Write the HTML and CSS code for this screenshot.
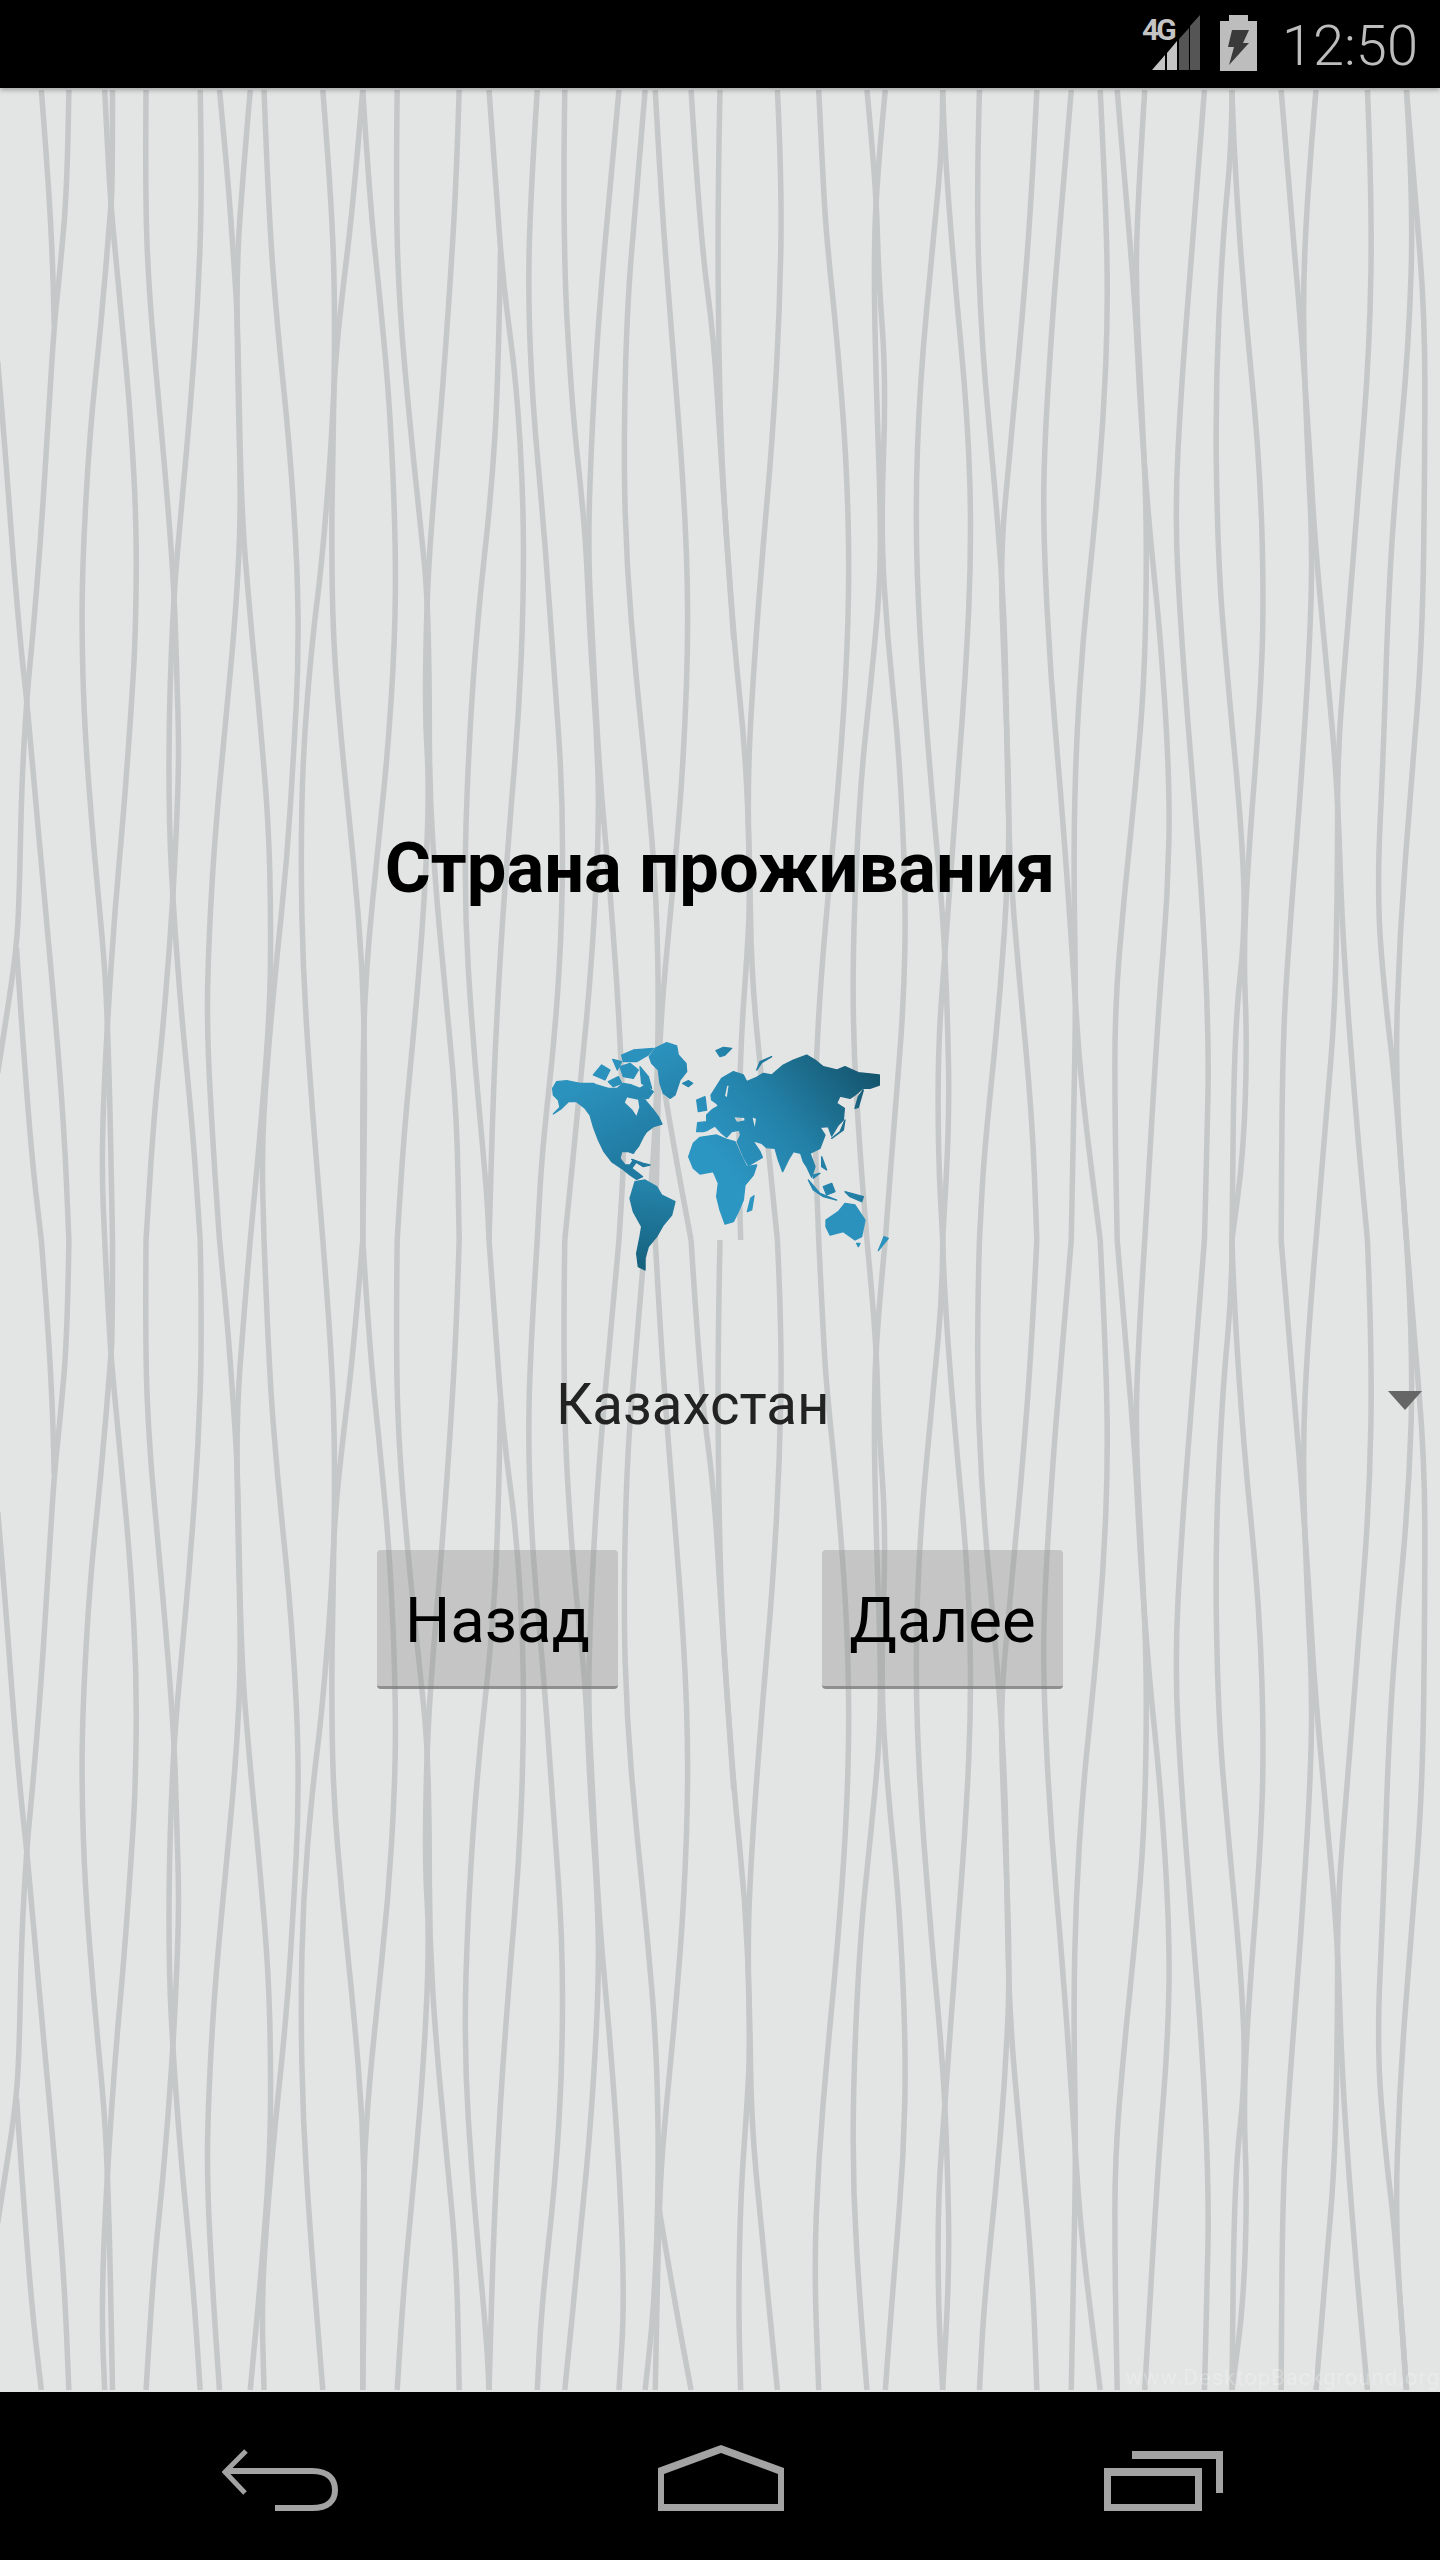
FILE: index.html
```html
<!DOCTYPE html>
<html lang="ru">

<head>
    <meta charset="UTF-8">
    <meta name="viewport" content="width=device-width, initial-scale=1.0">
    <title>Страна проживания</title>
    <link rel="stylesheet" href="styles.css">
</head>

<body>
    <div class="phone">
        <!-- status bar -->
        <div class="status-bar">
            <div class="signal">
                <span class="signal-label">4G</span>
                <svg class="signal-bars" width="48" height="55" viewBox="0 0 48 55">
                    <polygon fill="#c4c4c4" points="0,55 13,40 13,55" />
                    <polygon fill="#c4c4c4" points="15,38 25,26 25,55 15,55" />
                    <polygon fill="#555" points="27,24 37,13 37,55 27,55" />
                    <polygon fill="#555" points="38,11 48,0 48,55 38,55" />
                </svg>
            </div>
            <svg class="battery" width="37" height="56" viewBox="0 0 37 56">
                <path fill="#bdbdbd" d="M9 0H28V6H37V56H0V6H9Z" />
                <polygon fill="#3a3a3a" points="12,15 29,15 23,28 29,28 9,50 14,32 8,32" />
            </svg>
            <span class="clock">12:50</span>
        </div>

        <div class="screen">
            <!-- wallpaper, one tile drawn twice. paths come from waves.js -->
            <svg class="wallpaper" viewBox="0 0 3136 3136" preserveAspectRatio="none">
                <defs>
                    <g id="waves"></g>
                </defs>
                <use href="#waves" />
                <use href="#waves" y="1568" />
            </svg>

            <div class="content">
                <h1 class="title">Страна проживания</h1>

                <svg class="world-map" width="380" height="280" viewBox="0 0 1140 840">
                    <defs>
                        <linearGradient id="landEast" gradientUnits="userSpaceOnUse" x1="620" y1="500" x2="1030" y2="170">
                            <stop offset="0" stop-color="#2c96c3" />
                            <stop offset="0.45" stop-color="#2381a8" />
                            <stop offset="1" stop-color="#15566f" />
                        </linearGradient>
                        <linearGradient id="landNorth" gradientUnits="userSpaceOnUse" x1="180" y1="190" x2="300" y2="430">
                            <stop offset="0" stop-color="#2b92bd" />
                            <stop offset="1" stop-color="#2079a0" />
                        </linearGradient>
                        <linearGradient id="landSouth" gradientUnits="userSpaceOnUse" x1="370" y1="490" x2="340" y2="750">
                            <stop offset="0" stop-color="#2584ab" />
                            <stop offset="1" stop-color="#14607c" />
                        </linearGradient>
                    </defs>
                    <g fill="url(#landNorth)" stroke="url(#landNorth)" stroke-width="4" stroke-linejoin="round">
                        <!-- north america -->
                        <path d="M68,205 L80,185 L110,182 L150,190 L190,190 L200,195 L235,205 L262,205 L280,190 L305,195 L330,205 L345,195 L370,215 L355,235 L328,238 L290,230 L282,248 L305,270 L320,292 L330,262 L326,238 L345,240 L370,270 L385,290 L396,312 L370,320 L350,335 L340,350 L325,380 L315,392 L310,400 L295,395 L275,395 L270,415 L285,435 L300,435 L310,420 L320,425 L305,445 L325,460 L338,470 L320,478 L300,465 L275,445 L245,425 L222,395 L205,360 L190,320 L180,285 L165,265 L140,245 L115,245 L95,265 L70,282 L90,262 L85,240 L70,225 Z" />
                        <!-- arctic islands -->
                        <path d="M190,165 L215,135 L240,150 L225,180 Z" />
                        <path d="M248,118 L275,125 L262,150 Z" />
                        <path d="M275,105 L310,90 L370,85 L355,105 L320,125 L280,125 Z" />
                        <path d="M270,140 L300,130 L325,150 L310,175 L280,170 Z" />
                        <path d="M330,140 L355,170 L365,205 L335,190 Z" />
                        <path d="M235,185 L265,170 L275,190 L250,200 Z" />
                        <!-- greenland, iceland, caribbean -->
                        <path d="M358,110 L375,85 L410,68 L440,78 L445,105 L468,130 L470,155 L450,180 L435,225 L420,235 L400,220 L390,190 L385,150 L365,130 Z" />
                        <path d="M458,190 L475,182 L488,190 L475,200 Z" />
                        <path d="M305,418 L340,430 L360,435 L340,440 Z" />
                    </g>
                    <path fill="url(#landSouth)" stroke="url(#landSouth)" stroke-width="4" stroke-linejoin="round" d="M315,485 L345,480 L380,500 L395,525 L435,545 L425,585 L400,615 L380,650 L355,680 L345,715 L345,750 L325,740 L320,700 L330,650 L335,620 L310,575 L300,535 Z" />
                    <g fill="url(#landEast)" stroke="url(#landEast)" stroke-width="4" stroke-linejoin="round" fill-rule="evenodd">
                        <!-- eurasia, holes for baltic, black sea, caspian -->
                        <path d="M500,335 L503,308 L530,305 L530,285 L548,268 L565,258 L560,250 L545,240 L543,225 L575,175 L610,155 L640,165 L650,185 L680,172 L700,160 L725,165 L760,135 L790,120 L830,105 L855,120 L880,140 L920,150 L945,140 L985,158 L1020,162 L1048,165 L1048,195 L1020,205 L1000,205 L975,225 L960,235 L930,228 L920,250 L943,265 L940,300 L925,315 L905,348 L895,320 L870,322 L885,345 L870,385 L850,395 L840,400 L855,440 L845,472 L830,440 L820,425 L812,400 L790,395 L775,420 L758,455 L745,420 L735,385 L710,383 L695,370 L668,362 L690,395 L697,412 L655,437 L640,410 L622,365 L632,345 L628,330 L605,335 L590,352 L575,340 L555,318 L530,332 L520,335 Z M590,195 L598,195 L592,235 L583,228 Z M610,290 L645,292 L645,303 L620,308 Z M665,290 L680,295 L675,332 Z" />
                        <!-- africa -->
                        <path d="M510,352 L560,345 L590,358 L615,365 L635,410 L650,440 L680,435 L670,465 L645,495 L640,540 L625,575 L610,605 L585,612 L570,570 L560,530 L565,490 L550,455 L510,462 L490,445 L476,410 L490,370 Z" />
                        <path d="M662,535 L672,527 L665,570 L652,575 Z" />
                        <path d="M500,240 L525,230 L530,270 L505,275 Z" />
                        <path d="M558,92 L580,82 L605,85 L585,105 L570,110 Z" />
                        <path d="M680,150 L690,125 L725,110 L695,128 Z" />
                        <path d="M1000,210 L985,262 L975,265 L985,230 Z" />
                        <path d="M945,300 L940,330 L905,355 L930,335 Z" />
                        <path d="M835,480 L870,520 L920,540 L880,530 L850,510 Z" />
                        <path d="M880,500 L905,490 L915,515 L890,525 Z" />
                        <path d="M945,515 L1000,530 L995,545 L960,530 Z" />
                        <path d="M875,410 L890,450 L875,440 Z" />
                        <path d="M850,465 L870,460 L850,475 Z" />
                    </g>
                    <g fill="#2b92bd" stroke="#2b92bd" stroke-width="4" stroke-linejoin="round">
                        <path d="M888,600 L925,575 L945,550 L975,555 L1005,600 L995,650 L975,660 L940,635 L900,645 L888,620 Z" />
                        <path d="M1062,650 L1075,655 L1045,692 Z" />
                        <path d="M980,670 L990,670 L985,680 Z" />
                    </g>
                </svg>

                <div class="spinner">
                    <span class="spinner-value">Казахстан</span>
                    <svg class="spinner-arrow" width="34" height="19" viewBox="0 0 34 19">
                        <polygon fill="#666" points="0,0 34,0 17,19" />
                    </svg>
                </div>

                <div class="buttons">
                    <button class="btn">Назад</button>
                    <button class="btn">Далее</button>
                </div>
            </div>

            <div class="watermark">www.DesktopBackground.org</div>
        </div>

        <!-- navigation bar -->
        <div class="nav-bar">
            <svg width="116" height="66" viewBox="0 0 116 66">
                <path fill="none" stroke="#a3a3a3" stroke-width="5" d="M24 6 L3 27 L23 48" />
                <path fill="none" stroke="#a3a3a3" stroke-width="6" d="M4 26 H90 C107 26 113 35 113 45 C113 56 106 63 90 63 H53" />
            </svg>
            <svg width="126" height="66" viewBox="0 0 126 66">
                <path fill="#a3a3a3" fill-rule="evenodd" d="M63 0 L126 23 V66 H0 V23 Z M63 8 L120 29 V59 H6 V29 Z" />
            </svg>
            <svg width="119" height="66" viewBox="0 0 119 66">
                <path fill="#a3a3a3" fill-rule="evenodd" d="M0 23 H98 V66 H0 Z M7 31 V59 H91 V31 Z" />
                <path fill="#a3a3a3" d="M28 6 H119 V48 H112 V14 H28 Z" />
            </svg>
        </div>
    </div>

    <script src="waves.js"></script>
</body>

</html>
```

FILE: styles.css
```css
body {
    margin: 0;
    padding: 0;
    font-family: Roboto, sans-serif;
    background-color: #000;
}

.phone {
    display: flex;
    flex-direction: column;
    width: 1440px;
    height: 2560px;
}

/* status bar */

.status-bar {
    position: relative;
    z-index: 1;
    display: flex;
    justify-content: flex-end;
    align-items: flex-start;
    height: 88px;
    padding-right: 22px;
    background-color: #000;
    box-shadow: 0 2px 5px rgba(0, 0, 0, 0.3);
}

.signal {
    position: relative;
    margin-top: 15px;
    margin-right: 20px;
    height: 55px;
}

.signal-label {
    position: absolute;
    top: 0;
    left: -10px;
    color: #c4c4c4;
    font-size: 30px;
    line-height: 30px;
    font-weight: 700;
    letter-spacing: -3px;
}

.battery {
    margin-top: 15px;
    margin-right: 25px;
}

.clock {
    color: #bdbdbd;
    font-size: 56px;
    line-height: 92px;
    font-weight: 300;
}

/* main screen */

.screen {
    position: relative;
    flex: 1;
    overflow: hidden;
    background-color: #e3e4e4;
}

.wallpaper {
    position: absolute;
    top: 2px;
    left: 0;
    width: 1440px;
    height: 2300px;
}

.wallpaper path {
    fill: none;
    stroke: #c5c8c8;
    stroke-width: 5.5px;
    vector-effect: non-scaling-stroke;
}

.content {
    position: relative;
    display: flex;
    flex-direction: column;
}

.title {
    margin: 740px 0 0 0;
    text-align: center;
    color: #000;
    font-size: 70.5px;
    line-height: 80px;
    font-weight: 700;
}

.world-map {
    align-self: center;
    margin-top: 112px;
}

.spinner {
    display: flex;
    justify-content: space-between;
    align-items: flex-start;
    margin-top: 73px;
    padding: 0 18px 0 556px;
}

.spinner-value {
    color: #222;
    font-size: 56.5px;
    line-height: 64px;
}

.spinner-arrow {
    margin-top: 18px;
}

.buttons {
    display: flex;
    justify-content: center;
    gap: 204px;
    margin-top: 113px;
}

.btn {
    width: 241px;
    height: 139px;
    padding: 4px 0 0 0;
    border: none;
    border-bottom: 3px solid rgba(120, 120, 120, 0.7);
    border-radius: 4px;
    background-color: rgba(140, 140, 140, 0.35);
    color: #000;
    font-family: Roboto, sans-serif;
    font-size: 63.5px;
}

.watermark {
    position: absolute;
    right: 0;
    bottom: 2px;
    color: rgba(255, 255, 255, 0.25);
    font-size: 22px;
    letter-spacing: 1px;
}

/* navigation bar */

.nav-bar {
    display: flex;
    justify-content: space-between;
    align-items: flex-start;
    height: 115px;
    padding: 53px 217px 0 222px;
    background-color: #000;
}
```

FILE: waves.js
```js
// traced wallpaper lines, [x, y, x, y, ...], tile is 3136 x 1568 units
var waves = [
    [150,0,147,130,130,250,118,320,105,450,90,600,72,740,58,830,47,950,42,1100,36,1170,15,1260,-5,1340],
    [-5,370,10,480,30,650,47,770,58,830,75,950,95,1090,120,1260,140,1420,150,1568],
    [36,1170,50,1300,70,1460,90,1568],
    [90,0,105,120,115,240,118,320],
    [245,0,245,130,240,170,220,320,195,470,180,640,178,750,185,880,205,1040,228,1190,235,1290,240,1400,245,1568],
    [228,0,235,90,243,170,265,310,285,450,298,600,295,750,285,850,270,980,250,1120,235,1260,225,1380,222,1480,228,1568],
    [318,0,316,150,325,280,345,420,365,560,380,690,385,800,390,900,385,1000,375,1120,355,1280,335,1400,318,1568],
    [436,0,440,130,432,280,415,430,395,570,378,690,368,850,368,1000,378,1120,395,1260,420,1420,436,1568],
    [545,0,530,110,515,240,518,400,525,570,515,700,495,840,470,1000,455,1150,450,1280,465,1450,478,1568],
    [478,0,495,110,510,240,518,320,525,570,545,720,565,850,585,1000,590,1130,588,1250,570,1400,545,1568],
    [575,0,585,170,605,330,630,480,648,650,650,780,640,900,625,1050,600,1200,580,1340,570,1450,575,1568],
    [790,0,770,150,745,280,730,370,720,500,700,650,680,750,660,900,655,1050,660,1200,675,1350,703,1568],
    [790,0,805,150,830,300,850,440,862,620,860,750,845,900,820,1050,800,1180,790,1300,790,1568],
    [703,0,722,150,730,300,725,500,722,600,725,750,745,900,770,1050,790,1200,795,1350,790,1568],
    [865,0,862,150,870,300,895,470,915,590,930,680,935,800,935,950,950,1100,975,1260,995,1400,1000,1568],
    [1000,0,995,100,985,220,965,400,945,550,930,680,925,850,935,950,925,1100,905,1260,880,1420,865,1568],
    [1065,0,1080,130,1095,260,1125,400,1140,560,1140,700,1130,850,1110,1000,1090,1170,1075,1350,1065,1568],
    [1170,0,1155,150,1150,280,1160,430,1185,600,1205,780,1225,950,1225,1120,1210,1280,1180,1450,1170,1568],
    [1090,220,1085,400,1070,550,1040,720,1020,900,1010,1100,1030,1300,1060,1500,1065,1568],
    [1230,0,1225,200,1245,430,1275,600,1285,750,1300,880,1305,1000,1290,1180,1265,1350,1230,1568],
    [1348,0,1330,120,1305,300,1290,450,1280,620,1290,750,1305,930,1330,1100,1350,1280,1360,1450,1348,1568],
    [1405,0,1385,150,1365,300,1358,500,1365,650,1385,800,1410,950,1430,1100,1435,1280,1425,1450,1405,1568],
    [1427,0,1440,150,1465,350,1490,550,1500,720,1490,900,1470,1060,1445,1220,1435,1320,1427,1568],
    [1435,1320,1470,1450,1505,1568],
    [1505,0,1525,200,1555,340,1570,500,1598,750,1623,900,1633,1050,1636,1200,1658,1350,1693,1568],
    // right half
    [1568,0,1563,150,1565,350,1572,520,1598,750],
    [1693,0,1703,130,1698,300,1683,470,1658,650,1638,820,1628,950,1633,1100,1628,1170,1613,1300,1608,1450,1613,1568],
    [1783,0,1793,130,1800,200,1823,340,1843,500,1850,650,1843,800,1823,970,1803,1100,1783,1250,1773,1400,1783,1568],
    [1928,0,1908,130,1903,250,1908,400,1918,580,1916,680,1898,800,1873,950,1858,1150,1858,1300,1873,1450,1888,1568],
    [1888,0,1908,130,1913,250,1930,400,1918,600,1933,750,1958,900,1973,1100,1968,1250,1948,1400,1928,1568],
    [2053,0,2053,70,2033,200,2003,400,1993,580,2003,750,2028,950,2053,1120,2063,1250,2068,1400,2053,1568],
    [2053,0,2056,70,2078,250,2108,450,2116,620,2103,800,2078,1000,2058,1180,2043,1300,2043,1450,2053,1568],
    [2133,0,2126,150,2138,350,2168,550,2188,720,2193,900,2198,1050,2218,1200,2248,1400,2258,1568],
    [2258,0,2248,130,2228,300,2198,500,2178,640,2188,800,2200,1000,2188,1150,2168,1300,2143,1450,2133,1568],
    [2333,0,2313,150,2293,300,2273,500,2273,620,2288,800,2313,980,2338,1200,2353,1350,2396,1568],
    [2396,0,2408,150,2413,300,2403,450,2383,600,2358,750,2343,900,2338,1050,2343,1250,2338,1400,2333,1568],
    [2433,0,2453,150,2473,300,2483,430,2503,600,2528,750,2548,950,2543,1100,2523,1250,2493,1568],
    [2493,0,2478,150,2473,270,2488,450,2498,600,2493,800,2473,950,2448,1100,2428,1250,2428,1400,2433,1568],
    [2623,0,2598,200,2573,400,2558,580,2573,750,2598,950,2618,1100,2633,1300,2628,1450,2623,1568],
    [2683,0,2683,70,2663,200,2646,420,2653,650,2673,800,2703,1000,2713,1140,2688,1280,2683,1568],
    [2683,0,2686,70,2708,280,2743,500,2753,700,2743,850,2718,1050,2708,1180,2716,1300,2708,1450,2683,1568],
    [2790,0,2813,180,2833,320,2853,500,2863,610,2888,780,2913,950,2923,1150,2953,1400,2978,1568],
    [2866,0,2848,130,2836,300,2848,500,2858,620,2853,750,2833,950,2808,1150,2793,1300,2790,1568],
    [2978,0,2988,150,2983,350,2958,550,2933,750,2913,900,2913,1050,2908,1250,2888,1400,2866,1568],
    [3063,0,3078,150,3068,350,3038,550,3023,700,3013,900,2998,1100,3018,1250,3038,1350,3063,1568],
    [3063,0,3078,120,3103,300,3103,500,3098,750,3073,950,3048,1150,3038,1350,3063,1568]
];

var group = document.getElementById('waves');

waves.forEach(function (p) {
    // quadratic segments through the midpoints keep the curve smooth
    var d = 'M' + p[0] + ' ' + p[1];
    for (var i = 2; i < p.length - 2; i += 2) {
        var mx = (p[i] + p[i + 2]) / 2;
        var my = (p[i + 1] + p[i + 3]) / 2;
        d += ' Q' + p[i] + ' ' + p[i + 1] + ' ' + mx + ' ' + my;
    }
    d += ' L' + p[p.length - 2] + ' ' + p[p.length - 1];

    var path = document.createElementNS('http://www.w3.org/2000/svg', 'path');
    path.setAttribute('d', d);
    group.appendChild(path);
});
```
